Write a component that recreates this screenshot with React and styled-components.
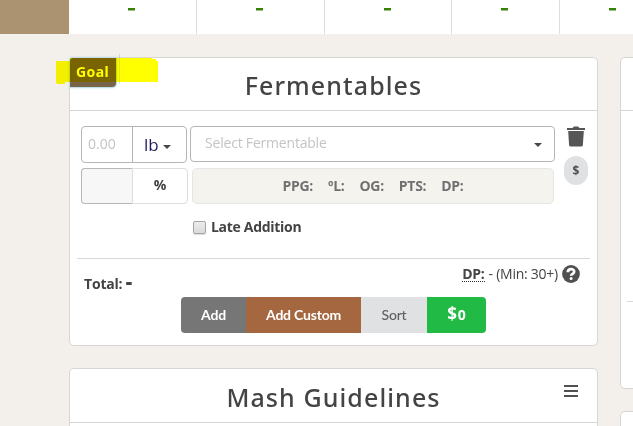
import React from 'react'
import styled, { createGlobalStyle } from 'styled-components'

const stats = [128, 128, 127, 108, 108]
const specs = ['PPG:', 'ºL:', 'OG:', 'PTS:', 'DP:']

function App() {
  return (
    <Page>
      <GlobalStyle />
      <StatBar>
        <StatLabel />
        {stats.map((width, i) => (
          <Stat key={i} $width={width}><Dash /></Stat>
        ))}
      </StatBar>
      <Columns>
        <MainColumn>
          <Card $height={289}>
            <CardHeader>
              <GoalButton>Goal</GoalButton>
              <Title>Fermentables</Title>
            </CardHeader>
            <Marker />
            <Fermentable />
            <Summary>
              <Total>Total: <b>-</b></Total>
              <Power>
                <abbr>DP:</abbr>
                <span>- (Min: 30+)</span>
                <HelpIcon />
              </Power>
            </Summary>
            <Actions>
              <Action $width={65} $bg="#767676">Add</Action>
              <Action $width={115} $bg="#a5673f">Add Custom</Action>
              <Action $width={66} $bg="#e0e1e2" $color="#5f6063" $weight={500}>Sort</Action>
              <Price $width={59} $bg="#21ba45">$<small>0</small></Price>
            </Actions>
          </Card>
          <Card $height={120}>
            <CardHeader $height={54}>
              <Title $line={57}>Mash Guidelines</Title>
              <MenuButton><i /><i /><i /></MenuButton>
            </CardHeader>
          </Card>
        </MainColumn>
        <SideColumn>
          <Card $height={332}>
            <CardHeader />
            <SideRule />
          </Card>
          <Card $height={120} />
        </SideColumn>
      </Columns>
    </Page>
  )
}

function Fermentable() {
  return (
    <Entry>
      <Fields>
        <FieldRow $gap={3} $height={37}>
          <Group>
            <Amount>0.00</Amount>
            <Unit>lb <Caret /></Unit>
          </Group>
          <Select>
            <span>Select Fermentable</span>
            <Caret />
          </Select>
        </FieldRow>
        <FieldRow $gap={4} $height={36}>
          <PercentGroup>
            <PercentInput />
            <Percent>%</Percent>
          </PercentGroup>
          <Specs>
            {specs.map((s) => <span key={s}>{s}</span>)}
          </Specs>
        </FieldRow>
        <Late>
          <Checkbox />
          <span>Late Addition</span>
        </Late>
      </Fields>
      <Tools>
        <TrashIcon />
        <CostButton>$</CostButton>
      </Tools>
    </Entry>
  )
}

function TrashIcon() {
  return (
    <svg width="18" height="21" viewBox="0 0 18 21" fill="#555">
      <path d="M0 2h5.500L7 .4h4L12.500 2H18v2H0z" />
      <path d="M1.200 5h15.600l-.9 14q-.1 1.500-1.600 1.500H3.700q-1.500 0-1.600-1.500z" />
    </svg>
  )
}

function HelpIcon() {
  return (
    <svg width="18" height="18" viewBox="0 0 18 18">
      <circle cx="9" cy="9" r="8.900" fill="#505050" />
      <path d="M5.800 7.200C5.900 3.100 12.200 3.200 12.200 6.700c0 2.200-3.100 2-3.100 4.100" fill="none" stroke="#fff" strokeWidth="2.700" />
      <circle cx="9.100" cy="13.600" r="1.500" fill="#fff" />
    </svg>
  )
}

// highlighter stroke over the goal button
function Marker() {
  return (
    <MarkerLayer width="102" height="30" viewBox="0 0 102 30">
      <path d="M0 7h14V4h82v1h4v2h2v21H9v2H1v-1H0z" fill="#ff0" />
      <path d="M63.500 0v30" stroke="#777" strokeOpacity=".2" />
    </MarkerLayer>
  )
}

export default App

const GlobalStyle = createGlobalStyle`
* {
  box-sizing: border-box;
}
body {
  margin: 0;
  background: #f3efea;
  overflow: hidden;
}
`
const Page = styled.div`
  width: 633px;
  height: 426px;
  overflow: hidden;
  background: #f3efea;
  color: #444;
  font-family: "Open Sans", "Noto Sans", sans-serif;
  font-size: 14px;
`
const StatBar = styled.div`
  display: flex;
  height: 34px;
  background: #fff;
`
const StatLabel = styled.div`
  flex: 0 0 69px;
  background: #ab9270;
`
const Stat = styled.div`
  flex: 0 0 ${(p) => p.$width}px;
  display: flex;
  justify-content: center;
  padding: 8px 2px 0 0;
  border-right: 1px solid #dedede;
`
const Dash = styled.div`
  width: 7px;
  height: 3px;
  background: #348400;
  border-bottom: 1px solid #a5b995;
`
const Columns = styled.div`
  display: flex;
  gap: 22px;
  padding: 23px 0 0 69px;
`
const MainColumn = styled.div`
  flex: 0 0 529px;
  display: flex;
  flex-direction: column;
  gap: 22px;
`
const SideColumn = styled(MainColumn)`
  flex-basis: 300px;
`
const Card = styled.div`
  position: relative;
  height: ${(p) => p.$height}px;
  background: #fff;
  border: 1px solid #d8d5d5;
  border-radius: 5px;
`
const CardHeader = styled.div`
  position: relative;
  height: ${(p) => p.$height || 53}px;
  border-bottom: 1px solid #d8d5d5;
`
const Title = styled.div`
  text-align: center;
  font-family: "Noto Sans", sans-serif;
  font-size: 25px;
  font-weight: 500;
  letter-spacing: 1.100px;
  line-height: ${(p) => p.$line || 55}px;
`
const GoalButton = styled.div`
  position: absolute;
  left: 0;
  top: 0;
  width: 46px;
  height: 29px;
  padding-left: 6px;
  border-radius: 3px 0 4px 0;
  background: #78644b;
  box-shadow: 0 0 0 1px #c5dde7, 0 0 2px 1px #b9dcec;
  color: #fff;
  font-family: "Noto Sans", sans-serif;
  font-size: 14px;
  font-weight: 700;
  letter-spacing: .4px;
  line-height: 27px;
`
const MarkerLayer = styled.svg`
  position: absolute;
  left: -14px;
  top: -4px;
  mix-blend-mode: multiply;
`
const MenuButton = styled.div`
  position: absolute;
  right: 19px;
  top: 16px;
  width: 14px;
  display: flex;
  flex-direction: column;
  gap: 3px;
  i {
    height: 2px;
    background: #505050;
  }
`
const Entry = styled.div`
  display: flex;
  gap: 10px;
  height: 148px;
  margin: 0 7px;
  padding: 15px 0 0 4px;
  border-bottom: 1px solid #d8d8d8;
`
const Fields = styled.div`
  width: 473px;
`
const FieldRow = styled.div`
  display: flex;
  align-items: flex-start;
  gap: ${(p) => p.$gap}px;
  height: ${(p) => p.$height}px;
  margin-bottom: 5px;
`
const Group = styled.div`
  display: flex;
  flex: 0 0 106px;
  height: 37px;
  border: 1px solid #b5b5b5;
  border-radius: 4px;
`
const Amount = styled.div`
  width: 51px;
  padding-left: 6px;
  border-right: 1px solid #b5b5b5;
  color: #c4c4c4;
  line-height: 34px;
`
const Unit = styled.div`
  flex: 1;
  display: flex;
  align-items: center;
  gap: 4px;
  padding: 0 0 0 11px;
  color: #211c58;
  font-size: 17px;
`
const Caret = styled.i`
  margin-top: 4px;
  border: 4px solid transparent;
  border-top-color: #484848;
  border-bottom: 0;
`
const Select = styled.div`
  flex: 0 0 365px;
  display: flex;
  align-items: center;
  justify-content: space-between;
  height: 36px;
  padding: 0 12px 3px 14px;
  border: 1px solid #b5b5b5;
  border-radius: 4px;
  color: #c4c4c4;
  letter-spacing: -.2px;
`
const PercentGroup = styled.div`
  display: flex;
  flex: 0 0 107px;
  height: 36px;
`
const PercentInput = styled.div`
  width: 51px;
  background: #f7f7f7;
  border: 1px solid #b5b5b5;
  border-right: 0;
  border-radius: 4px 0 0 4px;
`
const Percent = styled.div`
  flex: 1;
  border: 1px solid #dedede;
  border-radius: 0 4px 4px 0;
  text-align: center;
  font-size: 14px;
  font-weight: 700;
  line-height: 32px;
`
const Specs = styled.div`
  flex: 0 0 362px;
  display: flex;
  justify-content: center;
  gap: 15px;
  height: 36px;
  background: #f5f3ee;
  border: 1px solid #e6e6e6;
  border-radius: 5px;
  color: #707070;
  font-weight: 700;
  letter-spacing: -.3px;
  line-height: 34px;
`
const Late = styled.div`
  display: flex;
  align-items: center;
  gap: 5px;
  padding: 8px 0 0 112px;
  font-weight: 700;
  letter-spacing: -.3px;
`
const Checkbox = styled.div`
  width: 13px;
  height: 13px;
  margin-top: 1px;
  border: 1px solid #a5a5a5;
  border-radius: 2px;
  background: linear-gradient(#ececec, #dadada);
  box-shadow: 0 1px 1px #ddd;
`
const Tools = styled.div`
  display: flex;
  flex-direction: column;
  align-items: center;
  gap: 9px;
  width: 24px;
`
const CostButton = styled.div`
  width: 24px;
  height: 29px;
  border-radius: 12px;
  background: #e0e1e2;
  color: #505050;
  text-align: center;
  font-family: "Noto Sans", sans-serif;
  font-size: 12px;
  font-weight: 700;
  line-height: 29px;
`
const Summary = styled.div`
  display: flex;
  justify-content: space-between;
  height: 38px;
  padding: 0 17px 0 14px;
`
const Total = styled.div`
  padding-top: 13px;
  font-weight: 700;
  letter-spacing: -.2px;
  line-height: 20px;
  b {
    font-size: 20px;
  }
`
const Power = styled.div`
  display: flex;
  align-items: center;
  gap: 4px;
  height: 29px;
  letter-spacing: -.25px;
  abbr {
    border-bottom: 1px dotted #333;
    font-weight: 700;
    line-height: 15px;
  }
`
const Actions = styled.div`
  display: flex;
  width: 305px;
  height: 36px;
  margin-left: 111px;
  border-radius: 4px;
  overflow: hidden;
`
const Action = styled.div`
  flex: 0 0 ${(p) => p.$width}px;
  background: ${(p) => p.$bg};
  color: ${(p) => p.$color || '#fff'};
  text-align: center;
  font-family: Lato, sans-serif;
  font-size: 14px;
  font-weight: ${(p) => p.$weight || 700};
  letter-spacing: -.2px;
  line-height: 36px;
`
const Price = styled(Action)`
  font-family: "Noto Sans", sans-serif;
  font-size: 17px;
  line-height: 33px;
  small {
    margin-left: 1px;
    font-size: 14px;
  }
`
const SideRule = styled.div`
  height: 191px;
  margin-left: 6px;
  border-bottom: 1px solid #d8d8d8;
`
